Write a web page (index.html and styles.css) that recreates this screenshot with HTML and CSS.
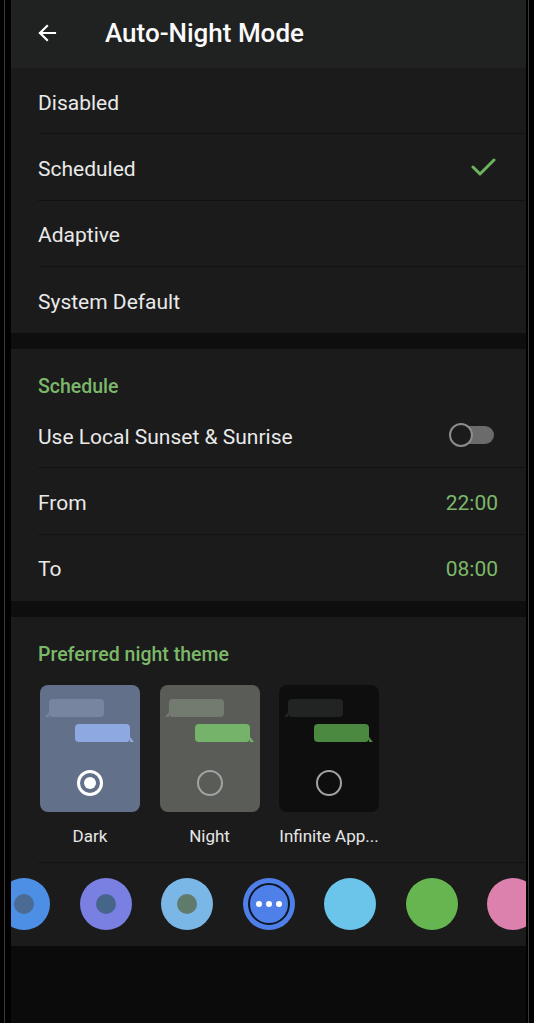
FILE: index.html
```html
<!DOCTYPE html>
<html>
<head>
<meta charset="utf-8">
<link rel="stylesheet" href="styles.css">
</head>
<body>
<div class="frame">
  <div class="bezel">
    <div class="screen">
      <header class="appbar">
        <svg class="back" width="24" height="24" viewBox="0 0 24 24"><path d="M20 12H5M12 5l-7 7 7 7" fill="none" stroke="#fff" stroke-width="2.2" stroke-linecap="square"/></svg>
        <h1 class="title">Auto-Night Mode</h1>
      </header>

      <section class="card">
        <div class="row divided"><span>Disabled</span></div>
        <div class="row divided"><span>Scheduled</span>
          <svg class="check" width="26" height="22" viewBox="0 0 26 22"><path d="M3 11l7 7L24 4" fill="none" stroke="#6db35c" stroke-width="3" stroke-linecap="round" stroke-linejoin="round"/></svg>
        </div>
        <div class="row divided"><span>Adaptive</span></div>
        <div class="row"><span>System Default</span></div>
      </section>

      <div class="gap"></div>

      <section class="card">
        <div class="sechead">Schedule</div>
        <div class="row divided"><span>Use Local Sunset &amp; Sunrise</span>
          <span class="toggle"><span class="thumb"></span></span>
        </div>
        <div class="row divided"><span>From</span><span class="value">22:00</span></div>
        <div class="row"><span>To</span><span class="value">08:00</span></div>
      </section>

      <div class="gap"></div>

      <section class="card themes">
        <div class="sechead">Preferred night theme</div>
        <div class="themelist">
          <div class="theme">
            <div class="preview dark">
              <span class="bubble in"></span>
              <span class="bubble out"></span>
              <span class="radio checked"></span>
            </div>
            <div class="tlabel">Dark</div>
          </div>
          <div class="theme">
            <div class="preview night">
              <span class="bubble in"></span>
              <span class="bubble out"></span>
              <span class="radio"></span>
            </div>
            <div class="tlabel">Night</div>
          </div>
          <div class="theme">
            <div class="preview infinite">
              <span class="bubble in"></span>
              <span class="bubble out"></span>
              <span class="radio"></span>
            </div>
            <div class="tlabel">Infinite App...</div>
          </div>
        </div>
        <div class="hr"></div>
        <div class="colors">
          <span class="dot c1"><span class="inner i1"></span></span>
          <span class="dot c2"><span class="inner i2"></span></span>
          <span class="dot c3"><span class="inner i3"></span></span>
          <span class="dot c4 selected"><span class="more"><i></i><i></i><i></i></span></span>
          <span class="dot c5"></span>
          <span class="dot c6"></span>
          <span class="dot c7"></span>
        </div>
      </section>
    </div>
  </div>
</div>
</body>
</html>
```

FILE: styles.css
```css
* { box-sizing: border-box; }
html, body { margin: 0; padding: 0; background: #000; }
body { font-family: Roboto, "Noto Sans", sans-serif; color: #e9e9e9; }

.frame { width: 534px; height: 1023px; padding: 0 5px 0 4px; background: #000; }
.bezel {
  height: 100%;
  border-left: 1px solid #3a3a3a;
  border-right: 1px solid #3a3a3a;
  padding: 0 2px 0 6px;
}
.screen { height: 100%; background: #0b0b0b; overflow: hidden; }

.appbar {
  height: 68px;
  background: #202121;
  display: flex;
  align-items: center;
  padding-left: 24px;
}
.back { margin-top: -3px; }
.title {
  margin: -3px 0 0 46px;
  font-size: 26px;
  font-weight: 500;
  color: #fafafa;
}

.card { background: #1b1b1b; }
.gap { height: 16px; background: #0e0e0e; }

.row {
  height: 66.3px;
  display: flex;
  align-items: center;
  justify-content: space-between;
  padding: 3px 28px 0 27px;
  font-size: 21px;
  position: relative;
}
.row.divided::after {
  content: "";
  position: absolute;
  left: 27px; right: 0; bottom: 0;
  height: 1px;
  background: #121212;
}
.check { margin-right: 2px; margin-top: -3px; }
.value { color: #7cb86a; }

.sechead {
  color: #7cb86a;
  font-size: 19.5px;
  font-weight: 500;
  padding: 26px 27px 0;
  height: 53px;
}

.toggle {
  width: 44px; height: 18px;
  border-radius: 9px;
  background: #6b6b6b;
  position: relative;
  margin-right: 4px;
  margin-top: -3px;
}
.thumb {
  position: absolute;
  left: -1px; top: -3px;
  width: 24px; height: 24px;
  border-radius: 50%;
  background: #1b1b1b;
  border: 2px solid #8c8c8c;
}

.themes .sechead { height: 68px; }
.themelist { display: flex; gap: 19.5px; padding-left: 29px; }
.theme { width: 100px; }
.preview {
  height: 127px;
  border-radius: 8px;
  position: relative;
}
.preview.dark { background: #637089; }
.preview.night { background: #5a5c57; }
.preview.infinite { background: #0e0e0e; }
.bubble { position: absolute; height: 18px; border-radius: 4px; }
.bubble.in { left: 9px; top: 14px; width: 55px; }
.bubble.out { left: 35px; top: 39px; width: 55px; }
.bubble.in::before, .bubble.out::after {
  content: ""; position: absolute; bottom: 0; width: 0; height: 0;
  border-bottom: 5px solid transparent;
}
.dark .bubble.in { background: #7885a0; }
.dark .bubble.out { background: #8ea8e2; }
.night .bubble.in { background: #737a70; }
.night .bubble.out { background: #76b36a; }
.infinite .bubble.in { background: #222323; }
.infinite .bubble.out { background: #4c8940; }
.bubble.in::before { left: -4px; border-left: 4px solid transparent; }
.bubble.out::after { right: -4px; border-right: 4px solid transparent; }
.dark .bubble.in::before { border-bottom-color: #7885a0; }
.dark .bubble.out::after { border-bottom-color: #8ea8e2; }
.night .bubble.in::before { border-bottom-color: #737a70; }
.night .bubble.out::after { border-bottom-color: #76b36a; }
.infinite .bubble.in::before { border-bottom-color: #222323; }
.infinite .bubble.out::after { border-bottom-color: #4c8940; }

.radio {
  position: absolute;
  left: 37px; top: 85px;
  width: 26px; height: 26px;
  border-radius: 50%;
  border: 2px solid #a3a3a3;
}
.radio.checked { border: 3px solid #fff; }
.radio.checked::after {
  content: ""; position: absolute;
  left: 4px; top: 4px; width: 12px; height: 12px;
  border-radius: 50%; background: #fff;
}

.tlabel {
  text-align: center;
  font-size: 17px;
  color: #e6e6e6;
  margin-top: 14px;
  white-space: nowrap;
  margin-left: -10px; margin-right: -10px;
}

.hr { height: 1px; background: #121212; margin: 16px 0 0 27px; }

.colors {
  display: flex;
  gap: 29.5px;
  margin-left: -13px;
  padding: 15px 0 16px;
}
.dot {
  flex: none;
  width: 52px; height: 52px;
  border-radius: 50%;
  display: flex; align-items: center; justify-content: center;
}
.c1 { background: #4d8fe5; }
.c2 { background: #7a7fe2; }
.c3 { background: #7ab6e6; }
.c4 { background: #4f80ea; }
.c5 { background: #6bc4ea; }
.c6 { background: #66b550; }
.c7 { background: #dc80ae; }
.inner { width: 20px; height: 20px; border-radius: 50%; }
.i1 { background: #4b6b94; }
.i2 { background: #45658a; }
.i3 { background: #607b6c; }
.more {
  width: 42px; height: 42px; border-radius: 50%;
  border: 2px solid #0d1626;
  display: flex; align-items: center; justify-content: center; gap: 4px;
}
.more i { width: 6px; height: 6px; border-radius: 50%; background: #fff; }
```
